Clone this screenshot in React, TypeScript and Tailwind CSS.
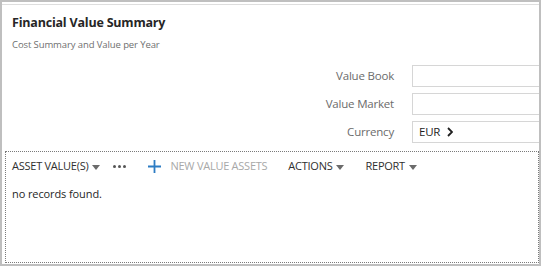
import React from 'react';

const Caret = () => (
  <svg width="8" height="5" viewBox="0 0 8 5" className="ml-[4px] mt-[1px]">
    <path d="M0 0h8L4 5z" fill="#6b6b6b" />
  </svg>
);

const fields = [
  { label: 'Value Book', value: '' },
  { label: 'Value Market', value: '' },
  { label: 'Currency', value: 'EUR' },
];

const App = () => {
  return (
    <div className="w-[541px] h-[266px] border-2 border-[#bfbfbf] bg-white overflow-hidden pt-[2px] font-['Open_Sans',sans-serif]">
      <div className="border-t border-[#dedede] h-full flex flex-col">
        <div className="pl-[10px] pt-[8px]">
          <h1 className="text-[12.5px] font-bold text-[#262626] leading-[20px] tracking-[-0.2px]">
            Financial Value Summary
          </h1>
          <p className="text-[9.5px] text-[#6f6f6f] mt-[5px] leading-[14px] tracking-[-0.1px]">
            Cost Summary and Value per Year
          </p>
        </div>

        <div className="flex flex-col gap-[6px] mt-[13px]">
          {fields.map((f) => (
            <div key={f.label} className="flex items-center h-[22px]">
              <div className="w-[392px] shrink-0 text-right text-[11.5px] text-[#6b6b6b] tracking-[-0.2px]">
                {f.label}
              </div>
              <div className="ml-[18px] w-[150px] shrink-0 h-[22px] border border-[#d6d6d6] flex items-center pl-[6px] text-[11.5px] text-[#1f1f1f]">
                {f.value && (
                  <>
                    <span className="tracking-[-0.2px]">{f.value}</span>
                    <svg width="6" height="10" viewBox="0 0 6 10" className="ml-[7px]">
                      <path d="M1 1l4 4-4 4" stroke="#1f1f1f" strokeWidth="1.8" fill="none" />
                    </svg>
                  </>
                )}
              </div>
            </div>
          ))}
        </div>

        <div className="ml-[3px] mt-[8px] h-[112px] border border-dotted border-[#7a7a7a] px-[6px]">
          <div className="flex items-center h-[28px] pt-[1px] text-[11px] tracking-[-0.25px] text-[#303030]">
            <span className="flex items-center">
              ASSET VALUE(S)
              <Caret />
            </span>
            <svg width="13" height="3" viewBox="0 0 13 3" className="ml-[13px]">
              <circle cx="1.5" cy="1.5" r="1.5" fill="#555" />
              <circle cx="6.5" cy="1.5" r="1.5" fill="#555" />
              <circle cx="11.5" cy="1.5" r="1.5" fill="#555" />
            </svg>
            <svg width="13" height="13" viewBox="0 0 13 13" className="ml-[22px]">
              <path d="M6.5 0v13M0 6.5h13" stroke="#2d7cc3" strokeWidth="1.8" />
            </svg>
            <span className="ml-[9px] text-[#a8a8a8]">NEW VALUE ASSETS</span>
            <span className="ml-[21px] flex items-center">
              ACTIONS
              <Caret />
            </span>
            <span className="ml-[21px] flex items-center">
              REPORT
              <Caret />
            </span>
          </div>
          <p className="text-[11px] text-[#262626] mt-[6px] tracking-[-0.1px]">no records found.</p>
        </div>
      </div>
    </div>
  );
};

export default App;
